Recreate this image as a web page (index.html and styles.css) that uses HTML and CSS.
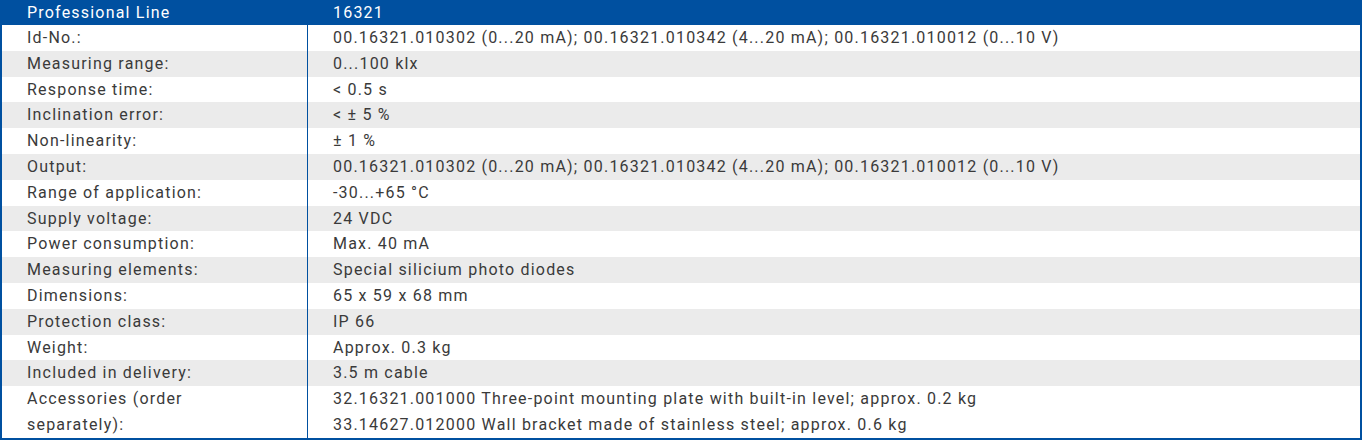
FILE: index.html
```html
<!DOCTYPE html>
<html lang="en">
<head>
<meta charset="utf-8">
<title>Professional Line 16321</title>
<link rel="stylesheet" href="styles.css">
</head>
<body>
<table class="spec">
  <thead>
    <tr class="head"><th class="label">Professional Line</th><th class="value">16321</th></tr>
  </thead>
  <tbody>
    <tr><td class="label">Id-No.:</td><td class="value">00.16321.010302 (0...20 mA); 00.16321.010342 (4...20 mA); 00.16321.010012 (0...10 V)</td></tr>
    <tr class="alt"><td class="label">Measuring range:</td><td class="value">0...100 klx</td></tr>
    <tr><td class="label">Response time:</td><td class="value">&lt; 0.5 s</td></tr>
    <tr class="alt"><td class="label">Inclination error:</td><td class="value">&lt; ± 5 %</td></tr>
    <tr><td class="label">Non-linearity:</td><td class="value">± 1 %</td></tr>
    <tr class="alt"><td class="label">Output:</td><td class="value">00.16321.010302 (0...20 mA); 00.16321.010342 (4...20 mA); 00.16321.010012 (0...10 V)</td></tr>
    <tr><td class="label">Range of application:</td><td class="value">-30...+65 °C</td></tr>
    <tr class="alt"><td class="label">Supply voltage:</td><td class="value">24 VDC</td></tr>
    <tr><td class="label">Power consumption:</td><td class="value">Max. 40 mA</td></tr>
    <tr class="alt"><td class="label">Measuring elements:</td><td class="value">Special silicium photo diodes</td></tr>
    <tr><td class="label">Dimensions:</td><td class="value">65 x 59 x 68 mm</td></tr>
    <tr class="alt"><td class="label">Protection class:</td><td class="value">IP 66</td></tr>
    <tr><td class="label">Weight:</td><td class="value">Approx. 0.3 kg</td></tr>
    <tr class="alt"><td class="label">Included in delivery:</td><td class="value">3.5 m cable</td></tr>
    <tr><td class="label">Accessories (order<br>separately):</td><td class="value">32.16321.001000 Three-point mounting plate with built-in level; approx. 0.2 kg<br>33.14627.012000 Wall bracket made of stainless steel; approx. 0.6 kg</td></tr>
  </tbody>
</table>
</body>
</html>
```

FILE: styles.css
```css
html, body {
  margin: 0;
  padding: 0;
  background: #ffffff;
}

.spec {
  width: 1362px;
  border-collapse: collapse;
  border: 2px solid #0050a0;
  border-top: 0;
  font-family: Roboto, "Liberation Sans", sans-serif;
  font-size: 16px;
  letter-spacing: 1.2px;
  color: #3a3a3a;
  table-layout: fixed;
}

.spec th,
.spec td {
  padding: 0 0 0 25px;
  line-height: 25.8px;
  text-align: left;
  vertical-align: top;
  font-weight: normal;
}

.spec .label {
  width: 280px;
  border-right: 1px solid #0050a0;
}

.head th {
  background: #0050a0;
  color: #ffffff;
  line-height: 25px;
  border-right: 0;
}

.alt td {
  background: #ebebeb;
}
```
